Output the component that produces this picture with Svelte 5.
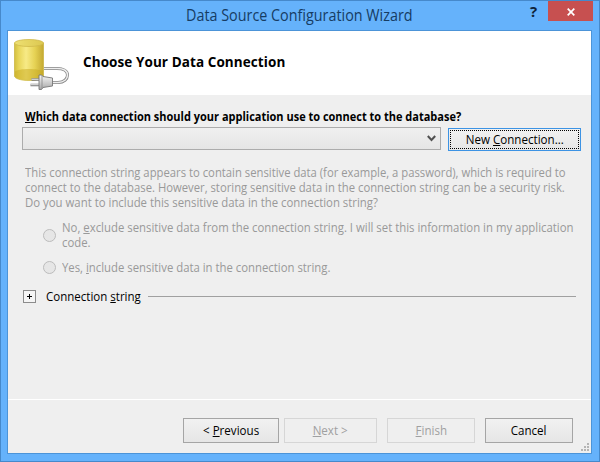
<script>
  const warning = [
    'This connection string appears to contain sensitive data (for example, a password), which is required to',
    'connect to the database. However, storing sensitive data in the connection string can be a security risk.',
    'Do you want to include this sensitive data in the connection string?'
  ];
</script>

<div class="window">
  <header class="titlebar">
    <h1>Data Source Configuration Wizard</h1>
    <div class="controls">
      <span class="help">?</span>
      <span class="close" aria-label="Close">
        <svg width="8" height="8" viewBox="0 0 8 8"><path d="M.7.7 7.3 7.3M7.3.7.7 7.3" stroke="#fff" stroke-width="1.7" /></svg>
      </span>
    </div>
  </header>

  <main class="client">
    <section class="banner">
      <svg class="logo" width="58" height="54" viewBox="0 0 58 54">
        <defs>
          <linearGradient id="side"><stop offset="0" stop-color="#d3bf40" /><stop offset=".15" stop-color="#e8d65a" /><stop offset=".4" stop-color="#f7ea86" /><stop offset=".7" stop-color="#e6d254" /><stop offset="1" stop-color="#c4a932" /></linearGradient>
          <linearGradient id="lid"><stop offset="0" stop-color="#eee072" /><stop offset="1" stop-color="#dcc850" /></linearGradient>
          <linearGradient id="metal" x2="0" y2="1"><stop offset="0" stop-color="#f8f8f8" /><stop offset="1" stop-color="#a8a8a8" /></linearGradient>
        </defs>
        <path d="M1.500 6v33c0 2.500 6.500 4.500 14.500 4.500S30.500 41.500 30.500 39V6z" fill="url(#side)" stroke="#c9b13a" stroke-width=".7" />
        <path d="M2 34.500c3-3.500 25-3.500 28 0V39c0 2-6 4-14 4s-14-2-14-4z" fill="#c8a91f" opacity=".5" />
        <ellipse cx="16" cy="6" rx="14.500" ry="3.500" fill="url(#lid)" stroke="#cfb94a" stroke-width=".8" />
        <path d="M31 31.500h13c6.500 0 10.500 2.500 10.500 6.500S51 45.500 45 45.500h-6" fill="none" stroke="#858585" stroke-width="3" />
        <path d="M31 31.500h13c6.500 0 10.500 2.500 10.500 6.500S51 45.500 45 45.500h-6" fill="none" stroke="#eee" stroke-width="1.500" />
        <path d="M18.500 42.500h8M17.500 48h9.500" stroke="#777" stroke-width="2.400" />
        <path d="M18.500 42.200h8M17.500 47.700h9.500" stroke="#eee" stroke-width="1.100" />
        <path d="M26 38h2.500l1.500 1.500 9.500 1.500v8l-9.500 1.500-1.500 2H26z" fill="url(#metal)" stroke="#777" stroke-width=".9" />
        <path d="M29 38.500v13" stroke="#888" stroke-width=".8" />
      </svg>
      <h2>Choose Your Data Connection</h2>
    </section>

    <section class="body">
      <div class="question"><u>W</u>hich data connection should your application use to connect to the database?</div>
      <div class="picker">
        <div class="combo">
          <svg width="9" height="7" viewBox="0 0 9 7"><path d="M.8 1 4.500 5 8.200 1" fill="none" stroke="#505050" stroke-width="2" /></svg>
        </div>
        <button class="new"><span class="focus"><span class="caption">New <u>C</u>onnection...</span></span></button>
      </div>
      <div class="warning">
        {#each warning as line, i}<div class="narrow w{i}">{line}</div>{/each}
      </div>
      <div class="option first">
        <i class="radio"></i>
        <div><div class="narrow o1">No, <u>e</u>xclude sensitive data from the connection string. I will set this information in my application</div><div class="narrow">code.</div></div>
      </div>
      <div class="option second">
        <i class="radio"></i>
        <div class="narrow">Yes, <u>i</u>nclude sensitive data in the connection string.</div>
      </div>
      <div class="expander">
        <span class="plus"></span>
        <span class="label">Connection <u>s</u>tring</span>
        <span class="rule"></span>
      </div>
    </section>

    <footer>
      <button class="prev"><span class="caption">&lt; <u>P</u>revious</span></button>
      <button class="next" disabled><span class="caption"><u>N</u>ext &gt;</span></button>
      <button class="finish" disabled><span class="caption"><u>F</u>inish</span></button>
      <button class="cancel"><span class="caption">Cancel</span></button>
      <svg class="grip" width="9" height="9" viewBox="0 0 9 9" fill="#b4b4b4"><path d="M6 0h2v2H6zM3 3h2v2H3zM6 3h2v2H6zM0 6h2v2H0zM3 6h2v2H3zM6 6h2v2H6z" /></svg>
    </footer>
  </main>
</div>

<style>
  :global(body) { margin: 0; }
  * { box-sizing: border-box; }
  .window {
    width: 600px; height: 462px; padding: 0 7px 7px 6px; overflow: hidden;
    border: 1px solid #4689cb; background: #65b2fb;
    display: flex; flex-direction: column;
    font: 12px/15px "Open Sans", "Noto Sans", sans-serif; color: #000; white-space: nowrap;
  }
  .titlebar { height: 29px; flex: none; position: relative; }
  h1 { margin: 0 0 0 179px; width: max-content; font-size: 15.500px; line-height: 29px; font-weight: 400; color: #163c63; transform: scaleX(.926); transform-origin: left; }
  .controls { position: absolute; right: -1px; top: 0; display: flex; }
  .help { width: 18px; font-size: 15px; line-height: 20px; font-weight: 700; color: #10243a; margin-right: 0; }
  .help { width: 18px; }
  .close { width: 45px; height: 20px; background: #c75050; display: flex; align-items: center; justify-content: center; padding-top: 2px; }
  .client { flex: 1; border: 1px solid #4c94d8; background: #efefef; display: flex; flex-direction: column; }
  .banner { height: 64px; flex: none; background: #fff; display: flex; align-items: center; }
  .logo { margin: 2px 0 0 5px; }
  h2 { margin: 0 0 3px 12px; font-size: 13.500px; line-height: 18px; font-weight: 700; letter-spacing: .08px; }
  .body { flex: 1; padding: 14px 15px 0 14px; }
  .question { font-weight: 700; margin-left: 3px; height: 18px; width: max-content; transform: scaleX(.916); transform-origin: left; }
  .narrow { width: max-content; transform: scaleX(.945); transform-origin: left; }
  .narrow.w0, .narrow.w1 { transform: scaleX(.94); }
  .narrow.w2 { transform: scaleX(.948); }
  .narrow.o1 { transform: scaleX(.9475); }
  .caption { display: inline-block; transform: scaleX(.965); }
  u { text-underline-offset: 1px; text-decoration-thickness: 1px; }
  .picker { display: flex; gap: 7px; margin-right: -5px; }
  .combo { width: 419px; height: 23px; border: 1px solid #acacac; background: linear-gradient(#f0f0f0, #e5e5e5); display: flex; align-items: center; justify-content: flex-end; padding-right: 4px; }
  button { font: inherit; color: inherit; padding: 0; margin: 0; border: 1px solid #a5a5a5; background: linear-gradient(#f1f1f1, #e6e6e6); height: 25px; }
  button:disabled { color: #a0a0a0; border-color: #d6d6d6; background: #efefef; }
  .new { width: 133px; height: 23px; position: relative; top: 1px; border-color: #3c93e4; padding: 1px; }
  .focus { display: flex; align-items: center; justify-content: center; height: 19px; border: 1px dotted #000; white-space: pre; }
  .warning { color: #999; padding: 15px 0 0 3px; }
  .option { display: flex; align-items: center; color: #999; padding-left: 21px; }
  .first { margin-top: 10px; }
  .second { margin-top: 10px; }
  .radio { width: 13px; height: 13px; border: 1px solid #bcbcbc; border-radius: 50%; background: #e6e6e6; margin-right: 6px; flex: none; }
  .expander { display: flex; align-items: center; margin-top: 14px; }
  .plus { width: 13px; height: 13px; border: 1px solid #8c8c8c; margin-left: 1px; background: linear-gradient(#000, #000) 3px 5px / 5px 1px no-repeat, linear-gradient(#000, #000) 5px 3px / 1px 5px no-repeat, #f5f5f5; }
  .label { margin-left: 10px; margin-right: 3px; transform: scaleX(.96); transform-origin: left; }
  .rule { height: 1px; flex: 1; background: #a0a0a0; }
  footer { height: 54px; flex: none; position: relative; border-top: 1px solid #fff; display: flex; padding: 18px 0 0 175px; }
  .prev { width: 96px; margin-right: 5px; }
  .next { width: 93px; margin-right: 10px; }
  .finish { width: 88px; margin-right: 10px; }
  .cancel { width: 88px; }
  .grip { position: absolute; right: 1px; bottom: 1px; }
</style>
